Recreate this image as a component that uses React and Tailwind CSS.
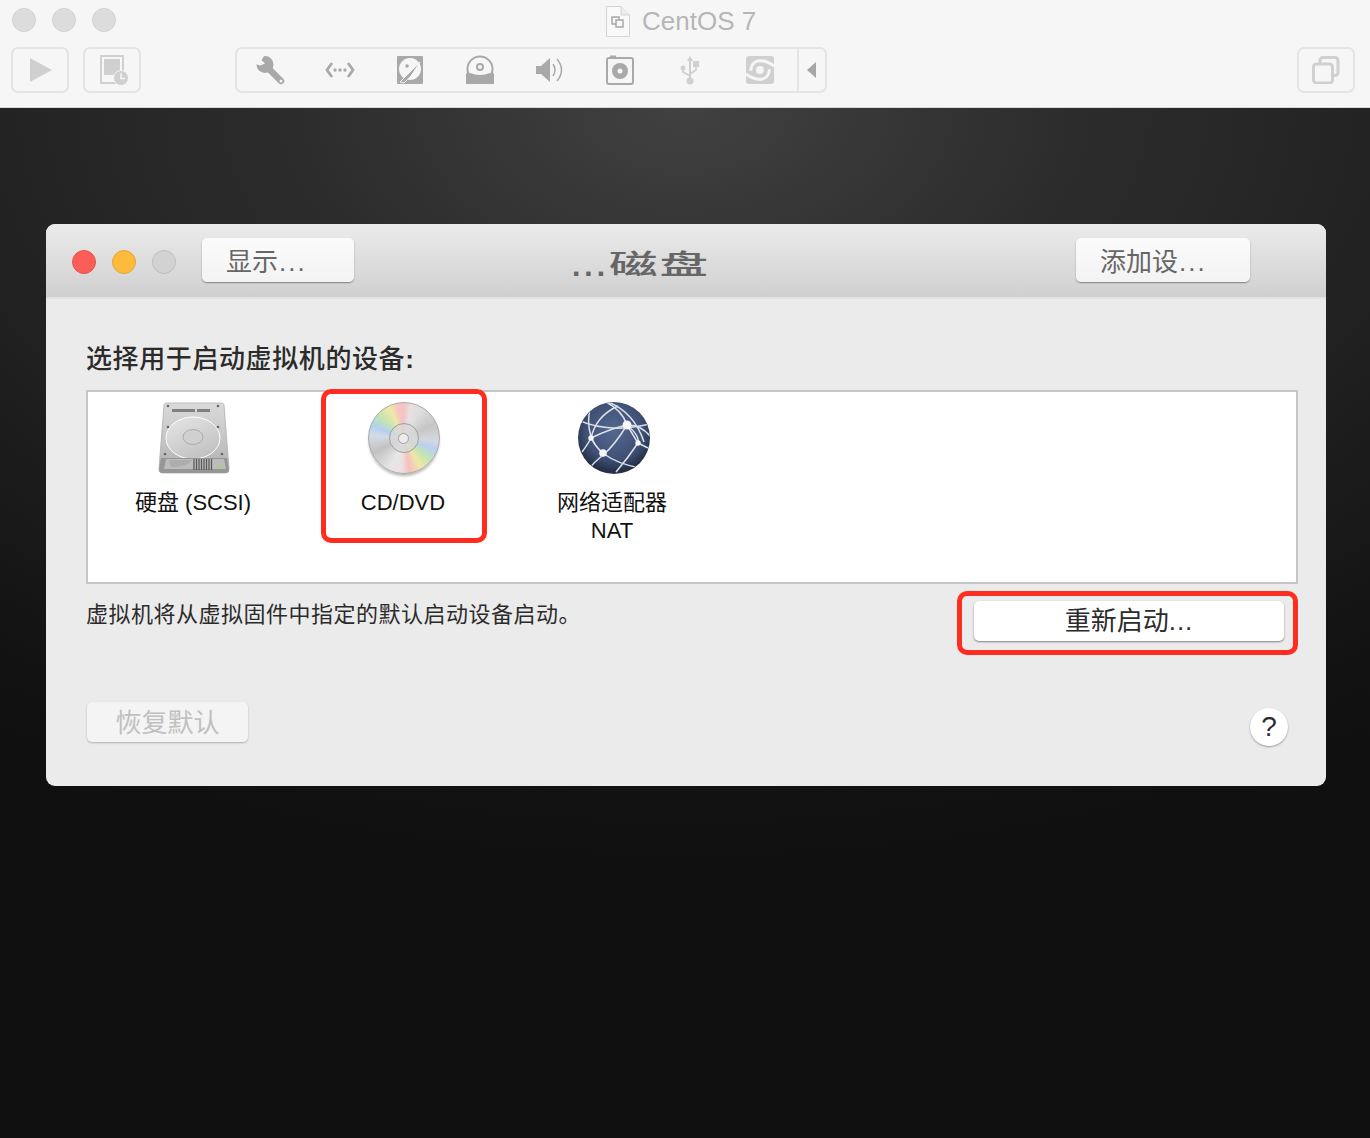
import React from "react";

const FONT = { fontFamily: '"Liberation Sans", "Noto Sans CJK SC", sans-serif' };

const Dot = ({ cls }) => <div className={`w-6 h-6 rounded-full border ${cls}`} />;

const G = "#a9a9a9";
const L = "#d0d0d0";

function ToolIcon({ children, w = 30 }) {
  return (
    <div className="flex items-center justify-center w-[70px] h-full shrink-0">
      <svg width={w} height="30" viewBox="0 0 30 30">{children}</svg>
    </div>
  );
}

function TopBar() {
  return (
    <div className="h-[108px] bg-[#f6f6f6] border-b border-[#d8d8d8] flex flex-col shrink-0">
      <div className="relative h-[47px] flex items-start pl-3 pt-2 gap-4 shrink-0">
        <Dot cls="bg-[#dcdcdc] border-[#d2d2d2]" />
        <Dot cls="bg-[#dcdcdc] border-[#d2d2d2]" />
        <Dot cls="bg-[#dcdcdc] border-[#d2d2d2]" />
        <div className="absolute left-[606px] top-[4px] flex items-center gap-[12px]">
          <svg width="24" height="31" viewBox="0 0 24 31">
            <path d="M0.5 0.5H15L23.5 9V30.5H0.5Z" fill="#f9f9f9" stroke="#d4d4d4" />
            <path d="M15 0.5V9H23.5" fill="#ececec" stroke="#d4d4d4" />
            <rect x="6" y="11" width="7" height="7" fill="none" stroke="#a8a8a8" strokeWidth="1.5" />
            <rect x="10" y="14" width="7" height="7" fill="#f9f9f9" stroke="#a8a8a8" strokeWidth="1.5" />
          </svg>
          <span className="text-[26px] leading-[34px] text-[#b6b6b6]">CentOS 7</span>
        </div>
      </div>
      <div className="flex items-start pl-[11px] pr-[15px]">
        <div className="w-[58px] h-[46px] border-2 border-[#e4e4e4] rounded-[7px] flex items-center justify-center">
          <svg className="ml-[2px]" width="24" height="26" viewBox="0 0 24 26"><path d="M1 1L23 13L1 25Z" fill={L} /></svg>
        </div>
        <div className="w-[58px] h-[46px] ml-[14px] border-2 border-[#e4e4e4] rounded-[7px] flex items-center justify-center">
          <svg className="ml-[3px]" width="30" height="30" viewBox="0 0 30 30">
            <rect x="2" y="1" width="22" height="27" fill="none" stroke={L} strokeWidth="2" />
            <rect x="5" y="4" width="16" height="16" fill={L} />
            <circle cx="22" cy="23" r="7.5" fill={L} stroke="#f6f6f6" strokeWidth="1" />
            <path d="M22 18.5V23.5H26" fill="none" stroke="#f6f6f6" strokeWidth="1.6" />
          </svg>
        </div>
        <div className="ml-[94px] h-[46px] w-[592px] border-2 border-[#e4e4e4] rounded-[7px] flex items-center">
          <div className="flex items-center h-full w-[562px] -ml-[2px]">
            <ToolIcon>
              <path d="M14 14L26 26" stroke={G} strokeWidth="6.500" strokeLinecap="round" />
              <circle cx="10" cy="9.500" r="8.500" fill={G} />
              <path d="M-1 -2L9 1L6.500 5L10 8.500L5.500 10.500L0 9Z" fill="#f6f6f6" />
              <circle cx="26" cy="26" r="1.500" fill="#f6f6f6" />
            </ToolIcon>
            <ToolIcon>
              <path d="M7 8L2 15L7 22" fill="none" stroke={G} strokeWidth="2.8" />
              <path d="M23 8L28 15L23 22" fill="none" stroke={G} strokeWidth="2.8" />
              <circle cx="10" cy="15" r="1.700" fill={G} />
              <circle cx="15" cy="15" r="1.700" fill={G} />
              <circle cx="20" cy="15" r="1.700" fill={G} />
            </ToolIcon>
            <ToolIcon>
              <rect x="2" y="1" width="26" height="28" rx="1" fill={G} />
              <circle cx="15" cy="14" r="11" fill="#f6f6f6" />
              <path d="M5 27L25 7L16 21L9 28Z" fill={G} stroke="#f6f6f6" strokeWidth="1" />
              <circle cx="12" cy="11" r="1.800" fill={G} />
            </ToolIcon>
            <ToolIcon>
              <circle cx="15" cy="14" r="12.500" fill="#f6f6f6" stroke={G} strokeWidth="2" />
              <circle cx="15" cy="12" r="3" fill="none" stroke={G} strokeWidth="2" />
              <path d="M1 29V19Q2 17 5 18Q15 22 25 18Q28 17 29 19V29Z" fill={G} />
            </ToolIcon>
            <ToolIcon>
              <path d="M1 11H6L15 3V27L6 19H1Z" fill={G} />
              <path d="M18 9Q22 15 18 21" fill="none" stroke={G} strokeWidth="1.500" />
              <path d="M22 4Q31 15 22 26" fill="none" stroke={G} strokeWidth="1.500" />
            </ToolIcon>
            <ToolIcon>
              <rect x="2" y="3" width="26" height="26" rx="2" fill="none" stroke={G} strokeWidth="2" />
              <rect x="5" y="0.500" width="6" height="3" fill={G} />
              <circle cx="15" cy="16" r="8" fill={G} />
              <circle cx="15" cy="16" r="2.500" fill="#f6f6f6" />
            </ToolIcon>
            <ToolIcon>
              <path d="M15 1L18 6H12Z" fill={L} />
              <path d="M15 5V25" stroke={L} strokeWidth="2" />
              <circle cx="15" cy="26" r="3.500" fill={L} />
              <circle cx="8" cy="13" r="2.500" fill={L} />
              <rect x="18" y="6" width="6" height="6" fill={L} />
              <path d="M8 14V17L15 21M21 11V15L15 19" fill="none" stroke={L} strokeWidth="1.600" />
            </ToolIcon>
            <ToolIcon>
              <rect x="1" y="1" width="28" height="28" rx="3" fill={L} />
              <circle cx="15" cy="15" r="4" fill="#f6f6f6" />
              <path d="M5.700 15.700C6 9 10 5.700 15 5.700C20 5.700 25 8 29 11" fill="none" stroke="#f6f6f6" strokeWidth="3" />
              <path d="M24.300 14.300C24 21 20 24.300 15 24.300C10 24.300 5 22 1 19" fill="none" stroke="#f6f6f6" strokeWidth="3" />
            </ToolIcon>
          </div>
          <div className="h-full flex-1 border-l-2 border-[#e4e4e4] flex items-center justify-center">
            <svg width="10" height="16" viewBox="0 0 10 16"><path d="M9 0V16L0 8Z" fill="#a5a5a5" /></svg>
          </div>
        </div>
        <div className="ml-auto w-[58px] h-[46px] border-2 border-[#e4e4e4] rounded-[7px] flex items-center justify-center">
          <svg width="28" height="28" viewBox="0 0 28 28">
            <rect x="8" y="1.500" width="18" height="18" rx="3" fill="none" stroke={L} strokeWidth="3" />
            <rect x="1.500" y="8" width="19" height="19" rx="3" fill="#f6f6f6" stroke={L} strokeWidth="3" />
          </svg>
        </div>
      </div>
    </div>
  );
}

function HeaderBtn({ children, w }) {
  return (
    <div
      className={`${w} h-[44px] rounded-[5px] bg-gradient-to-b from-[#fbfbfb] to-[#f3f3f3] shadow-[0_1px_1.500px_rgba(0,0,0,0.4)] pl-6 text-[26px] leading-[48px] text-[#666666]`}
    >
      {children}
      <span className="tracking-[2px] ml-[1px]">...</span>
    </div>
  );
}

function Disk() {
  return (
    <svg width="72" height="74" viewBox="0 0 72 74">
      <defs>
        <linearGradient id="hd" x1="0" y1="0" x2="0" y2="1">
          <stop offset="0" stopColor="#dadada" />
          <stop offset="0.7" stopColor="#bebebe" />
          <stop offset="1" stopColor="#a8a8a8" />
        </linearGradient>
        <linearGradient id="pl" x1="0" y1="0" x2="0.600" y2="1">
          <stop offset="0" stopColor="#e6e6e6" />
          <stop offset="1" stopColor="#c2c2c2" />
        </linearGradient>
      </defs>
      <path d="M6 3C6 2 7 1 9 1H63C65 1 66 2 66 3L71 66C71 69 70 71 67 71H5C2 71 1 69 1 66Z" fill="url(#hd)" stroke="#b0b0b0" strokeWidth="0.800" />
      <rect x="14" y="7" width="23" height="3" fill="#808080" />
      <rect x="39" y="7" width="13" height="3" fill="#808080" />
      <ellipse cx="35" cy="36" rx="27" ry="21" fill="url(#pl)" stroke="#ffffff" strokeWidth="1" />
      <ellipse cx="35" cy="35" rx="10" ry="7.500" fill="#d0d0d0" stroke="#ababab" />
      <g fill="#666">
        <circle cx="10" cy="4" r="1.300" /><circle cx="60" cy="4" r="1.300" />
        <circle cx="10" cy="25" r="1.300" /><circle cx="60" cy="25" r="1.300" />
        <circle cx="7" cy="52" r="1.300" /><circle cx="64" cy="52" r="1.300" />
      </g>
      <path d="M3 56H69L71 68C71 70 70 71 67 71H5C2 71 1 70 1 68Z" fill="#969696" />
      <path d="M8 57H66L68 67H6Z" fill="#bcbcbc" />
      <path d="M11 58H34Q30 65 13 65Z" fill="#adadad" />
      <g stroke="#555" strokeWidth="1.200">
        <path d="M36 57V68M38.500 57V68M41 57V68M43.500 57V68M46 57V68M48.500 57V68M51 57V68M53.500 57V68" />
      </g>
      <rect x="60" y="63" width="3" height="3" fill="#9fd86b" />
    </svg>
  );
}

function Disc() {
  return (
    <div className="w-[72px] h-[72px] -ml-[2px] rounded-full border border-[#a8a8a8] flex items-center justify-center shadow-[0_3px_3px_-1px_rgba(0,0,0,0.3)] bg-[conic-gradient(#f4c4c4_0deg,#e8e0e0_12deg,#dedede_30deg,#c6c6c6_65deg,#d4d8de_95deg,#b8d0f0_110deg,#c4e4b4_130deg,#eee8a8_150deg,#f6c0c0_170deg,#ece2e2_185deg,#e6e6e6_205deg,#c2c2c2_245deg,#d4dce6_275deg,#b4cff0_290deg,#c4e4b4_312deg,#f0e8a8_335deg,#f6c4c4_350deg,#f4c4c4_360deg)]">
      <div className="w-[30px] h-[30px] rounded-full border border-[#9e9e9e] bg-[#d8d8d8]/80 flex items-center justify-center">
        <div className="w-[11px] h-[11px] rounded-full border border-[#a0a0a0] bg-[#ececec]" />
      </div>
    </div>
  );
}

function Globe() {
  return (
    <svg width="72" height="72" viewBox="0 0 72 72">
      <defs>
        <radialGradient id="gl" cx="0.500" cy="0.400" r="0.620">
          <stop offset="0" stopColor="#546890" />
          <stop offset="0.650" stopColor="#3f5074" />
          <stop offset="0.930" stopColor="#232d45" />
          <stop offset="1" stopColor="#4a5468" />
        </radialGradient>
        <clipPath id="gc"><circle cx="36" cy="36" r="35.500" /></clipPath>
      </defs>
      <circle cx="36" cy="36" r="36" fill="url(#gl)" />
      <g clipPath="url(#gc)" fill="none" stroke="#dbe0e8" strokeWidth="1.500">
        <path d="M0 18Q30 32 72 22" />
        <path d="M12 6Q6 36 26 52Q40 62 62 66" />
        <path d="M13 36Q34 26 49 23Q62 22 72 34" />
        <path d="M49 23L60 41Q50 56 38 70" />
        <path d="M49 23Q44 8 28 0" />
        <path d="M49 23Q36 44 26 52Q16 60 8 70" />
        <path d="M49 23Q62 34 60 41L70 46" />
        <path d="M13 36Q18 46 26 52" />
        <path d="M4 50Q10 42 13 36Q18 14 40 4" />
        <path d="M30 0Q56 10 66 40" />
      </g>
      <circle cx="49" cy="23" r="4.500" fill="#f6f8fa" />
      <circle cx="13" cy="36" r="2.700" fill="#f6f8fa" />
      <circle cx="60" cy="41" r="2.700" fill="#f6f8fa" />
      <circle cx="25" cy="51" r="3.800" fill="#f6f8fa" />
    </svg>
  );
}

function Device({ w, ml, icon, label, sub, iconShift }) {
  return (
    <div className={`${w} ${ml} flex flex-col items-center shrink-0`}>
      <div className={`h-[76px] mt-[10px] flex items-start ${iconShift}`}>{icon}</div>
      <div className="mt-[11px] text-[22px] leading-[28px] text-[#111111] whitespace-nowrap">{label}</div>
      {sub && <div className="text-[22px] leading-[28px] text-[#111111]">{sub}</div>}
    </div>
  );
}

function Dialog() {
  return (
    <div className="w-[1280px] h-[562px] ml-[46px] mt-[116px] rounded-[9px] bg-[#ebebeb] flex flex-col shrink-0 overflow-hidden">
      <div className="relative h-[75px] shrink-0 bg-gradient-to-b from-[#ebebeb] to-[#d0d0d0] border-b-2 border-[#e2e2e2] flex items-start pt-[14px] pl-[26px]">
        <div className="flex gap-4 mt-[12px]">
          <Dot cls="bg-[#fd5d57] border-[#e6534c]" />
          <Dot cls="bg-[#fdbb3d] border-[#e3a532]" />
          <Dot cls="bg-[#d2d2d2] border-[#bdbdbd]" />
        </div>
        <div className="ml-[26px]"><HeaderBtn w="w-[152px]">显示</HeaderBtn></div>
        <div className="absolute left-[526px] top-[21px] h-[40px] flex items-center text-[#666666] whitespace-nowrap">
          <span className="text-[30px] leading-[40px] font-bold tracking-[4px] mt-[2px]">...</span>
          <span className="inline-block origin-left scale-x-[1.8] text-[27px] leading-[40px] font-medium tracking-[1px]">磁盘</span>
        </div>
        <div className="ml-auto mr-[76px]"><HeaderBtn w="w-[174px]">添加设</HeaderBtn></div>
      </div>
      <div className="flex-1 flex flex-col px-10">
        <div className="mt-[42px] h-[36px] text-[26px] leading-[36px] font-medium text-[#2b2b2b] tracking-[0.600px]">选择用于启动虚拟机的设备<span className="font-bold">:</span></div>
        <div className="mt-[13px] h-[194px] w-[1212px] bg-white border-2 border-[#c6c6c6] flex items-start">
          <Device w="w-[210px]" ml="ml-0" icon={<Disk />} label="硬盘 (SCSI)" iconShift="ml-[2px]" />
          <Device w="w-[210px]" ml="ml-0" icon={<Disc />} label="CD/DVD" iconShift="ml-[3px]" />
          <Device w="w-[210px]" ml="-ml-[1px]" icon={<Globe />} label="网络适配器" sub="NAT" iconShift="ml-[3px]" />
        </div>
        <div className="flex items-start justify-between mt-[17px] w-[1212px]">
          <div className="text-[22px] leading-[28px] text-[#2b2b2b] tracking-[0.500px]">虚拟机将从虚拟固件中指定的默认启动设备启动。</div>
          <div className="w-[310px] h-[40px] mr-[14px] rounded-[5px] bg-white shadow-[0_1px_2px_rgba(0,0,0,0.45)] text-center text-[26px] leading-[40px] text-[#2b2b2b]">
            重新启动<span className="tracking-[1px]">...</span>
          </div>
        </div>
        <div className="flex items-start justify-between mt-[61px] w-[1202px] pl-[1px]">
          <div className="w-[161px] h-[40px] rounded-[5px] bg-[#f4f4f4] shadow-[0_1px_2px_rgba(0,0,0,0.25)] text-center text-[26px] leading-[42px] text-[#c0c0c0]">
            恢复默认
          </div>
          <div className="w-[38px] h-[38px] mt-[6px] rounded-full bg-white shadow-[0_1px_2px_rgba(0,0,0,0.35)] text-center text-[28px] leading-[38px] text-[#2b2b2b]">?</div>
        </div>
      </div>
    </div>
  );
}

export default function App() {
  return (
    <div className="relative w-[1370px] h-[1138px] overflow-hidden bg-[#111111] flex flex-col" style={FONT}>
      <TopBar />
      <div className="flex-1 flex flex-col bg-[radial-gradient(ellipse_1300px_800px_at_50%_0%,#414141_0%,#2c2c2c_30%,#232323_53%,#121212_86%,#0f0f0f_100%)]">
        <Dialog />
      </div>
      <div className="absolute left-[321px] top-[389px] w-[166px] h-[154px] border-[5px] border-[#ff2d20] rounded-[10px]" />
      <div className="absolute left-[957px] top-[591px] w-[341px] h-[64px] border-[5px] border-[#ff2d20] rounded-[10px]" />
    </div>
  );
}
